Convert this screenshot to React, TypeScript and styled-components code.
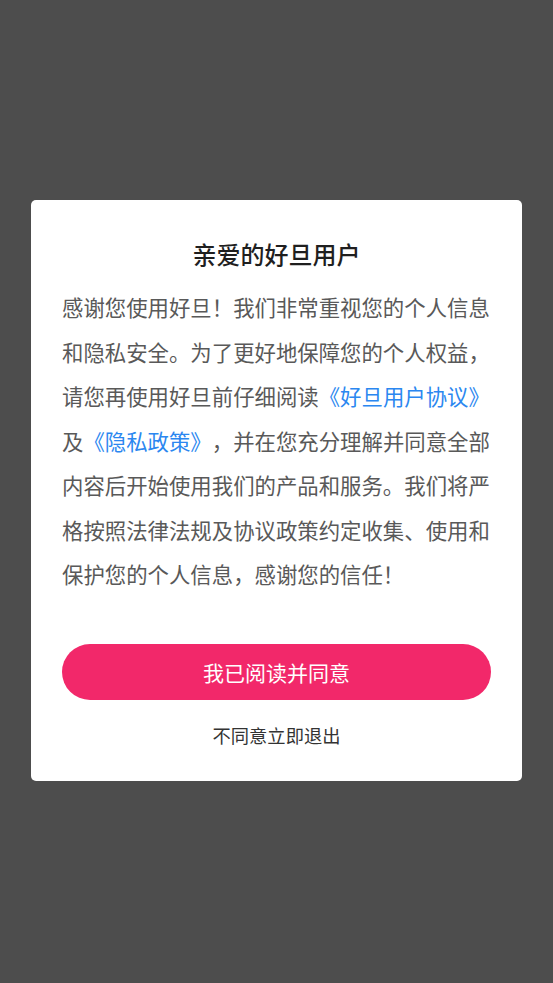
import React from "react";
import styled, { createGlobalStyle } from "styled-components";

const GlobalStyle = createGlobalStyle`
  html, body {
    margin: 0;
    padding: 0;
    background: #4d4d4d;
  }
  body {
    font-family: "Noto Sans CJK SC", "Noto Sans", sans-serif;
    text-spacing-trim: space-all;
  }
`;

const Screen = styled.div`
  width: 553px;
  height: 983px;
  background: #4d4d4d;
  display: flex;
  justify-content: center;
  padding-top: 200px;
  box-sizing: border-box;
`;

const Card = styled.div`
  width: 491px;
  height: 581px;
  box-sizing: border-box;
  background: #ffffff;
  border-radius: 5px;
  padding: 39px 31px 0;
  display: flex;
  flex-direction: column;
`;

const Title = styled.h1`
  margin: 0;
  font-size: 24px;
  line-height: 30px;
  font-weight: 500;
  color: #1f1f1f;
  text-align: center;
`;

const Body = styled.p`
  margin: 16px 0 0;
  font-size: 21.4px;
  line-height: 44.5px;
  color: #595959;
  text-align: left;
  text-spacing-trim: space-all;
`;

const Link = styled.span`
  color: #2b87f0;
`;

const AgreeButton = styled.button`
  margin-top: 47px;
  height: 56px;
  width: 100%;
  border: none;
  border-radius: 28px;
  background: #f2286a;
  color: #ffffff;
  font-family: inherit;
  font-size: 21px;
  line-height: 56px;
  padding: 0;
`;

const Exit = styled.div`
  margin-top: 23px;
  font-size: 18.3px;
  line-height: 24px;
  color: #333333;
  text-align: center;
`;

export default function App() {
  return (
    <>
      <GlobalStyle />
      <Screen>
        <Card>
          <Title>亲爱的好旦用户</Title>
          <Body>
            感谢您使用好旦！我们非常重视您的个人信息和隐私安全。为了更好地保障您的个人权益，请您再使用好旦前仔细阅读
            <Link>《好旦用户协议》</Link>及<Link>《隐私政策》</Link>
            ，并在您充分理解并同意全部内容后开始使用我们的产品和服务。我们将严格按照法律法规及协议政策约定收集、使用和保护您的个人信息，感谢您的信任！
          </Body>
          <AgreeButton>我已阅读并同意</AgreeButton>
          <Exit>不同意立即退出</Exit>
        </Card>
      </Screen>
    </>
  );
}
